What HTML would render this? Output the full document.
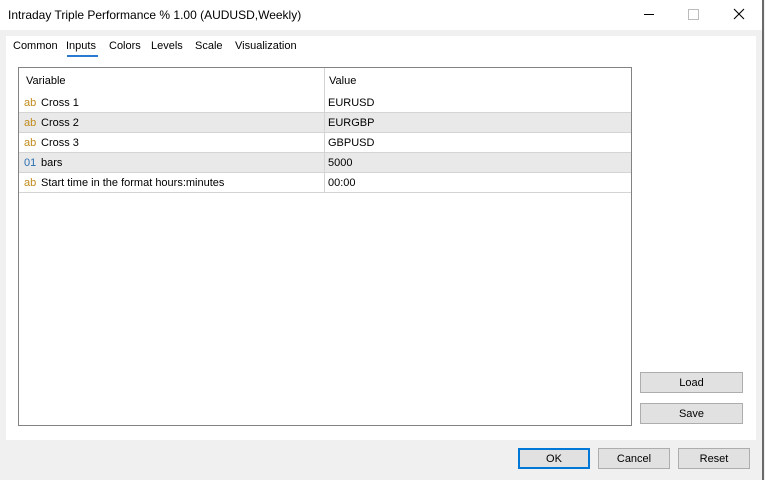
<html><head><style>
body{margin:0;width:765px;height:480px;background:#f0f0f0;font-family:"Liberation Sans",sans-serif;font-size:11px;color:#000;position:relative;overflow:hidden}
.a{position:absolute}
.title{left:0;top:0;width:762px;height:30px;background:#fff}
.row{position:absolute;left:0;width:612px;height:19px;border-bottom:1px solid #d4d4d4}
.row span{position:absolute;top:4px}
.ic{color:#c08a1a;left:5px}
.btn{position:absolute;background:#e1e1e1;border:1px solid #adadad;box-sizing:border-box;text-align:center;line-height:21px;font-size:11px}
</style></head><body>
<div class="a title"></div>
<div class="a" style="left:8px;top:8px;font-size:12px">Intraday Triple Performance % 1.00 (AUDUSD,Weekly)</div>
<div class="a" style="left:644px;top:14px;width:10px;height:1px;background:#000"></div>
<div class="a" style="left:688px;top:9px;width:9px;height:9px;border:1px solid #bbb"></div>
<svg class="a" style="left:733px;top:8px" width="12" height="12"><path d="M1 1L11 11M11 1L1 11" stroke="#000" stroke-width="1.1"/></svg>
<div class="a" style="left:762px;top:0;width:2px;height:480px;background:#6a6a6a"></div>
<div class="a" style="left:6px;top:36px;width:750px;height:404px;background:#fff"></div>
<div class="a" style="left:13px;top:40px">Common</div>
<div class="a" style="left:66px;top:40px">Inputs</div>
<div class="a" style="left:67px;top:55px;width:31px;height:2px;background:#2a7ad0"></div>
<div class="a" style="left:109px;top:40px">Colors</div>
<div class="a" style="left:151px;top:40px">Levels</div>
<div class="a" style="left:195px;top:40px">Scale</div>
<div class="a" style="left:235px;top:40px">Visualization</div>
<div class="a" style="left:18px;top:67px;width:612px;height:357px;border:1px solid #828282;background:#fff">
 <div class="row" style="top:0;height:24px;border:none"><span style="left:7px;top:7px">Variable</span><span style="left:310px;top:7px">Value</span></div>
 <div class="row" style="top:25px"><span class="ic">ab</span><span style="left:22px">Cross 1</span><span style="left:309px">EURUSD</span></div>
 <div class="row" style="top:45px;background:#e9e9e9"><span class="ic">ab</span><span style="left:22px">Cross 2</span><span style="left:309px">EURGBP</span></div>
 <div class="row" style="top:65px"><span class="ic">ab</span><span style="left:22px">Cross 3</span><span style="left:309px">GBPUSD</span></div>
 <div class="row" style="top:85px;background:#e9e9e9"><span class="ic" style="color:#2a6fb0">01</span><span style="left:22px">bars</span><span style="left:309px">5000</span></div>
 <div class="row" style="top:105px"><span class="ic">ab</span><span style="left:22px">Start time in the format hours:minutes</span><span style="left:309px">00:00</span></div>
 <div class="a" style="left:305px;top:0;width:1px;height:125px;background:#d4d4d4"></div>
</div>
<div class="btn" style="left:640px;top:372px;width:103px;height:21px">Load</div>
<div class="btn" style="left:640px;top:403px;width:103px;height:21px">Save</div>
<div class="btn" style="left:518px;top:448px;width:72px;height:21px;border:2px solid #0078d7;line-height:19px">OK</div>
<div class="btn" style="left:598px;top:448px;width:72px;height:21px">Cancel</div>
<div class="btn" style="left:678px;top:448px;width:72px;height:21px">Reset</div>
</body></html>
